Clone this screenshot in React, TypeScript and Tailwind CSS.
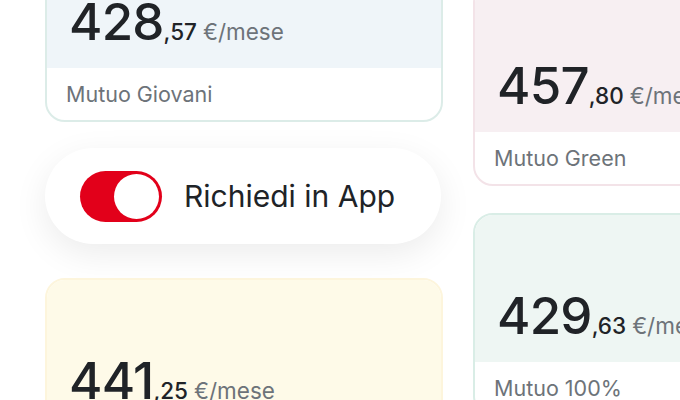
import React from "react";

type Offer = {
  whole: string;
  cents: string;
  label: string;
  top: string;
  border: string;
};

const giovani: Offer = { whole: "428", cents: ",57", label: "Mutuo Giovani", top: "bg-[#eff5f9]", border: "border-[#dcece8]" };
const green: Offer = { whole: "457", cents: ",80", label: "Mutuo Green", top: "bg-[#f7eff2]", border: "border-[#f3e3e8]" };
const cento: Offer = { whole: "429", cents: ",63", label: "Mutuo 100%", top: "bg-[#eef6f3]", border: "border-[#d9ede6]" };
const base: Offer = { whole: "441", cents: ",25", label: "Mutuo Base", top: "bg-[#fefae8]", border: "border-[#fdf5dc]" };

function RateCard({ offer }: { offer: Offer }) {
  return (
    <div className={`w-[398px] shrink-0 overflow-hidden rounded-[20px] border-2 bg-white ${offer.border}`}>
      <div className={`flex h-[147px] items-end pb-[21px] pl-[22px] ${offer.top}`}>
        <div className="flex items-baseline">
          <span className="text-[51px] font-medium leading-none tracking-[-0.8px] text-[#202327]">{offer.whole}</span>
          <span className="text-[22.5px] font-medium leading-none text-[#202327]">{offer.cents}</span>
          <span className="ml-[6px] text-[22.5px] leading-none text-[#6d7379]">€/mese</span>
        </div>
      </div>
      <div className="flex h-[52px] items-center pl-[19px]">
        <span className="text-[21.5px] leading-[28px] text-[#6d7379]">{offer.label}</span>
      </div>
    </div>
  );
}

function AppToggle() {
  return (
    <div className="mt-[26px] flex h-[96px] w-[396px] items-center rounded-full bg-white pl-[35px] shadow-[0_10px_34px_rgba(0,0,0,0.08)]">
      <div className="flex h-[51px] w-[82px] items-center justify-end rounded-full bg-[#e2001a] p-[3px]">
        <div className="h-[45px] w-[45px] rounded-full bg-white" />
      </div>
      <span className="ml-[22px] text-[30px] leading-none text-[#202327]">Richiedi in App</span>
    </div>
  );
}

export default function App() {
  return (
    <div
      className="relative h-[400px] w-[680px] overflow-hidden bg-white"
      style={{ fontFamily: "Inter, 'Noto Sans', sans-serif" }}
    >
      <div className="flex gap-[30px] pl-[45px]">
        <div className="mt-[-81px] flex flex-col">
          <RateCard offer={giovani} />
          <AppToggle />
          <div className="mt-[34px]">
            <RateCard offer={base} />
          </div>
        </div>
        <div className="mt-[-17px] flex flex-col">
          <RateCard offer={green} />
          <div className="mt-[27px]">
            <RateCard offer={cento} />
          </div>
        </div>
      </div>
    </div>
  );
}
